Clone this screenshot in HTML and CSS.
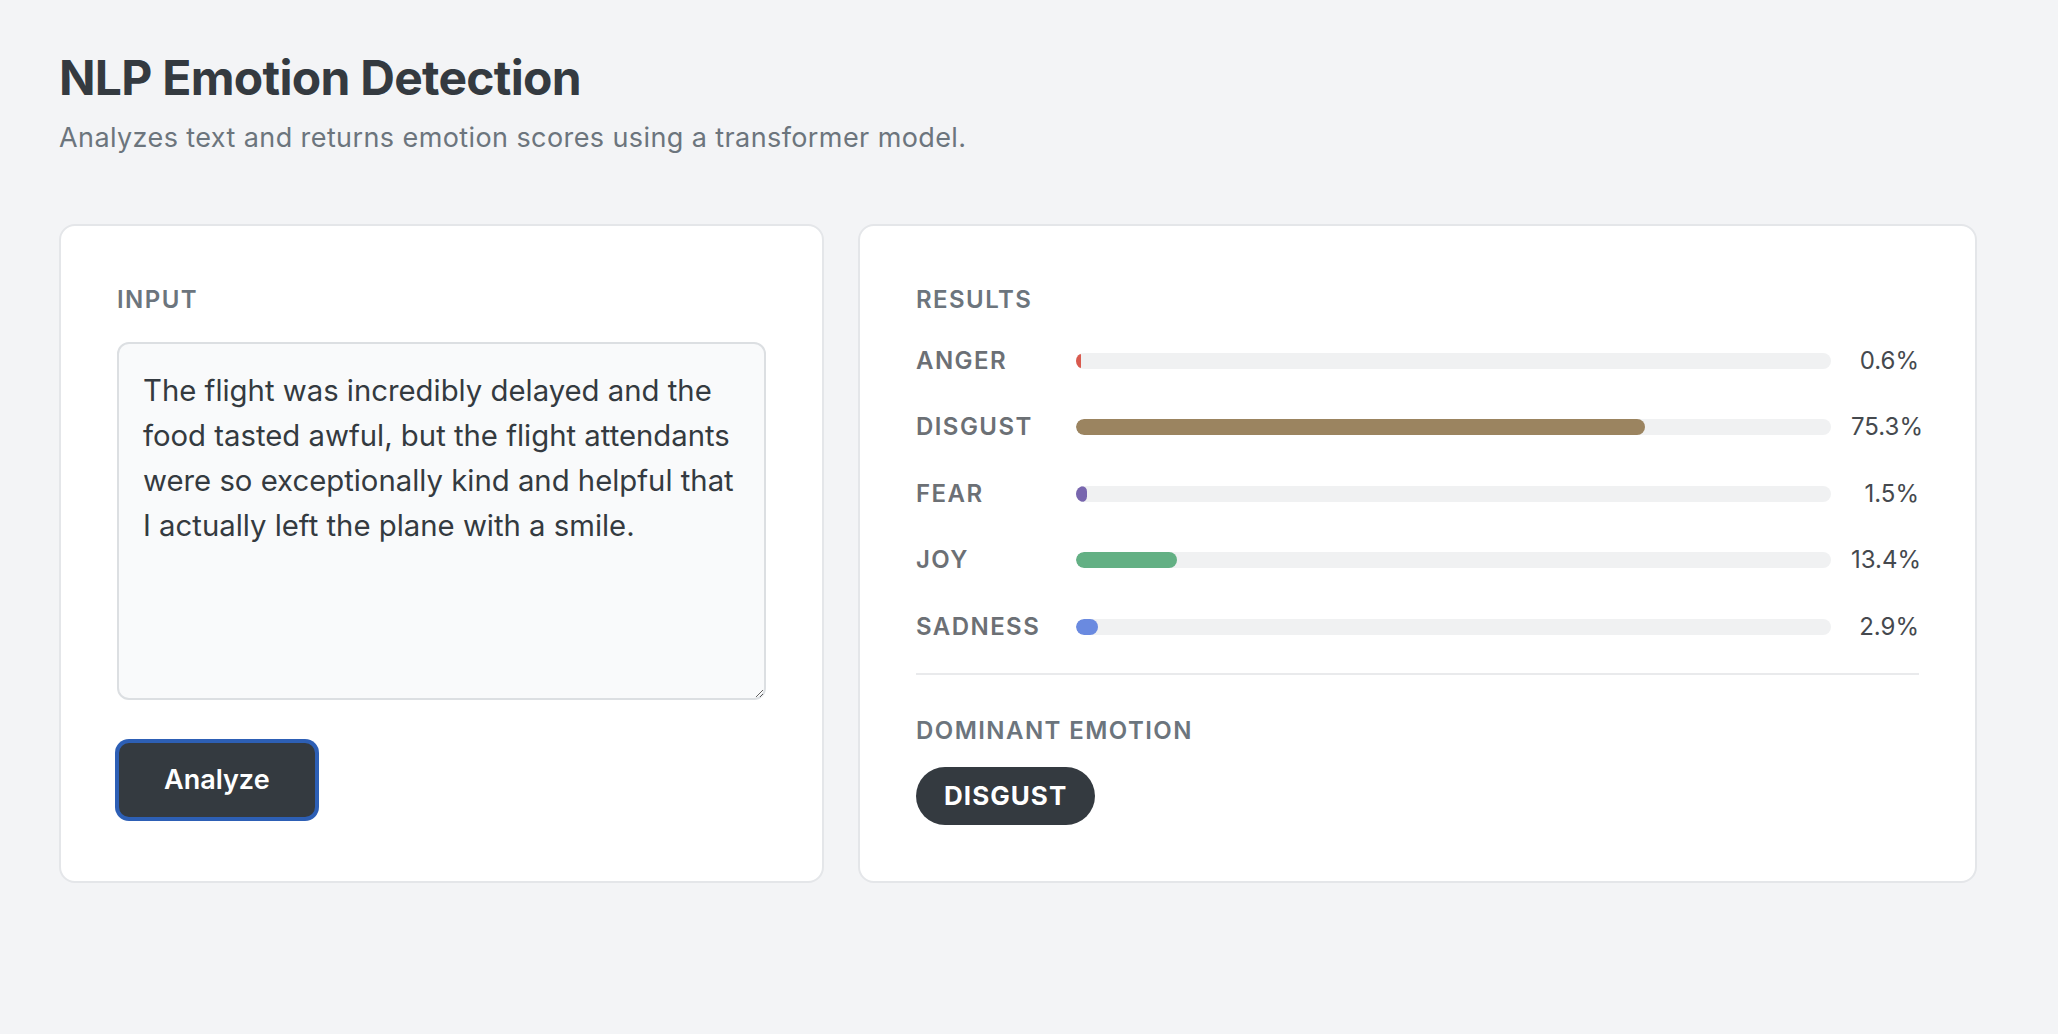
FILE: index.html
```html
<!DOCTYPE html>
<html lang="en">
<head>
  <meta charset="UTF-8" />
  <meta name="viewport" content="width=device-width, initial-scale=1.0"/>
  <title>NLP Emotion Detection</title>
  <link rel="stylesheet" href="styles.css">
</head>
<body>
  <main class="page">
    <h1>NLP Emotion Detection</h1>
    <p class="subtitle">Analyzes text and returns emotion scores using a transformer model.</p>

    <div class="panels">
      <section class="card">
        <h2 class="section-label">Input</h2>
        <textarea class="input-text">The flight was incredibly delayed and the food tasted awful, but the flight attendants were so exceptionally kind and helpful that I actually left the plane with a smile.</textarea>
        <button class="analyze-btn">Analyze</button>
      </section>

      <section class="card">
        <h2 class="section-label">Results</h2>
        <ul class="scores">
          <li class="score">
            <span class="score-name">Anger</span>
            <div class="track"><div class="fill anger" style="width: 0.6%"></div></div>
            <span class="score-value">0.6%</span>
          </li>
          <li class="score">
            <span class="score-name">Disgust</span>
            <div class="track"><div class="fill disgust" style="width: 75.3%"></div></div>
            <span class="score-value">75.3%</span>
          </li>
          <li class="score">
            <span class="score-name">Fear</span>
            <div class="track"><div class="fill fear" style="width: 1.5%"></div></div>
            <span class="score-value">1.5%</span>
          </li>
          <li class="score">
            <span class="score-name">Joy</span>
            <div class="track"><div class="fill joy" style="width: 13.4%"></div></div>
            <span class="score-value">13.4%</span>
          </li>
          <li class="score">
            <span class="score-name">Sadness</span>
            <div class="track"><div class="fill sadness" style="width: 2.9%"></div></div>
            <span class="score-value">2.9%</span>
          </li>
        </ul>
        <hr class="divider">
        <h2 class="section-label dominant-label">Dominant Emotion</h2>
        <span class="dominant">Disgust</span>
      </section>
    </div>
  </main>
</body>
</html>
```
FILE: styles.css
```css
body {
  margin: 0;
  background: #f3f4f6;
  font-family: Inter, "Noto Sans", sans-serif;
  color: #343a40;
}

.page {
  padding: 49px 59px;
}

h1 {
  margin: 0 0 11px;
  font-size: 48px;
  line-height: 1.2;
  font-weight: 700;
  letter-spacing: -0.015em;
  color: #343a40;
}

.subtitle {
  margin: 0 0 67px;
  font-size: 27px;
  line-height: 39px;
  letter-spacing: 0.015em;
  color: #6c757d;
}

.panels {
  display: grid;
  grid-template-columns: 765px 1119px;
  gap: 34px;
}

.card {
  background: white;
  border: 2px solid #e4e6e9;
  border-radius: 16px;
  padding: 56px;
  display: flex;
  flex-direction: column;
  align-items: flex-start;
}

.section-label {
  margin: 0 0 24px;
  font-size: 24px;
  line-height: 36px;
  font-weight: 600;
  letter-spacing: 0.06em;
  text-transform: uppercase;
  color: #6c757d;
}

.input-text {
  box-sizing: border-box;
  width: 100%;
  height: 358px;
  padding: 24px;
  border: 2px solid #dcdfe2;
  border-radius: 12px;
  background: #f9fafb;
  font-family: Inter, "Noto Sans", sans-serif;
  font-size: 29.3px;
  line-height: 45px;
  color: #343a40;
  resize: vertical;
}

.analyze-btn {
  margin-top: 41px;
  padding: 19px 45px;
  border: 2px solid #2d5fb5;
  box-shadow: 0 0 0 2px #2d5fb5;
  border-radius: 12px;
  background: #343a40;
  color: white;
  font-family: Inter, "Noto Sans", sans-serif;
  font-size: 27px;
  line-height: 36px;
  font-weight: 600;
  cursor: pointer;
}

.scores {
  list-style: none;
  margin: 1px 0 0;
  padding: 0;
  width: 100%;
  display: flex;
  flex-direction: column;
  gap: 30.5px;
}

.score {
  display: grid;
  grid-template-columns: 140px 1fr 68px;
  column-gap: 20px;
  align-items: center;
  line-height: 36px;
}

.score-name {
  font-size: 24px;
  font-weight: 600;
  letter-spacing: 0.06em;
  text-transform: uppercase;
  color: #6c7075;
}

.track {
  height: 16px;
  background: #f0f1f2;
  border-radius: 999px;
  overflow: hidden;
}

.fill {
  height: 100%;
  border-radius: 999px;
}

.fill.anger { background: #d95a4e; }
.fill.disgust { background: #9b8460; }
.fill.fear { background: #7866ae; }
.fill.joy { background: #63b084; }
.fill.sadness { background: #6a8ae0; }

.score-value {
  text-align: right;
  font-size: 24px;
  color: #45494e;
}

.divider {
  width: 100%;
  margin: 28px 0 38px;
  border: none;
  border-top: 2px solid #e9eaec;
}

.dominant-label {
  margin-bottom: 18px;
}

.dominant {
  display: inline-block;
  padding: 11px 28px;
  border-radius: 999px;
  background: #343a40;
  color: white;
  font-size: 26px;
  line-height: 36px;
  font-weight: 700;
  letter-spacing: 0.04em;
  text-transform: uppercase;
}
```
